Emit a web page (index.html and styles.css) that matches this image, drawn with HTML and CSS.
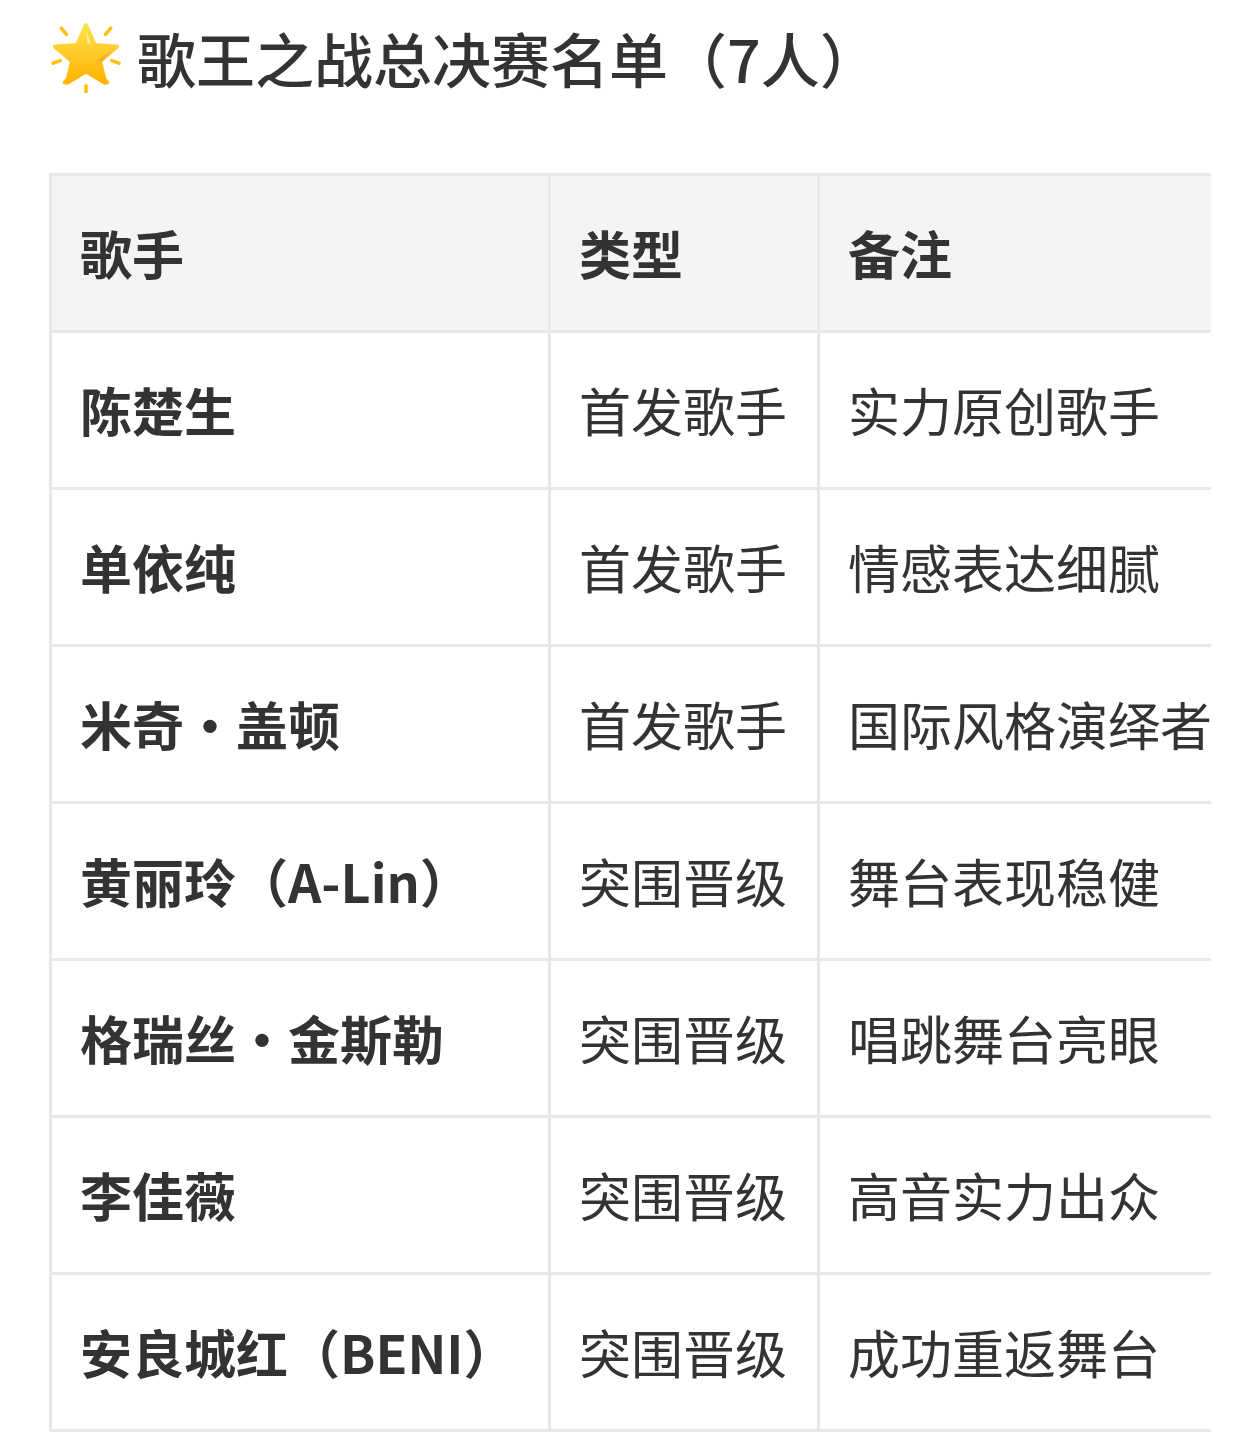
FILE: index.html
```html
<!DOCTYPE html>
<html lang="zh-CN">
<head>
<meta charset="utf-8">
<title>歌王之战总决赛名单</title>
<link rel="stylesheet" href="styles.css">
</head>
<body>
<div class="page">
  <h2 class="title">
    <svg class="star" viewBox="0 0 68 68" aria-hidden="true">
      <defs>
        <linearGradient id="sg" x1="0" y1="0" x2="0" y2="1">
          <stop offset="0" stop-color="#FFE14D"/>
          <stop offset="1" stop-color="#FFB300"/>
        </linearGradient>
      </defs>
      <g stroke="#FFC107" stroke-width="3.4" stroke-linecap="round">
        <line x1="10" y1="5" x2="15" y2="11"/>
        <line x1="58" y1="5" x2="53" y2="11"/>
        <line x1="2" y1="39" x2="9" y2="36.5"/>
        <line x1="66" y1="39" x2="59" y2="36.5"/>
        <line x1="13" y1="58" x2="17" y2="53"/>
        <line x1="55" y1="58" x2="51" y2="53"/>
        <line x1="34" y1="61" x2="34" y2="67"/>
      </g>
      <path fill="url(#sg)" stroke="url(#sg)" stroke-width="4" stroke-linejoin="round"
        d="M34 2 L42.5 21.5 L64 23 L47.5 37 L52.5 58 L34 47 L15.5 58 L20.5 37 L4 23 L25.5 21.5 Z"/>
      <path fill="#FFF59D" opacity="0.8" d="M34.5 7 L38.5 20 L35 20 Z"/>
      <path fill="#F9A825" opacity="0.85" d="M45 36 L59 27 L48 39.5 Z"/>
    </svg>
    <span>歌王之战总决赛名单（7人）</span>
  </h2>
  <div class="table-wrap">
    <table class="roster">
      <colgroup>
        <col class="c1">
        <col class="c2">
        <col class="c3">
      </colgroup>
      <thead>
        <tr><th>歌手</th><th>类型</th><th>备注</th></tr>
      </thead>
      <tbody>
        <tr><td class="name">陈楚生</td><td>首发歌手</td><td>实力原创歌手</td></tr>
        <tr><td class="name">单依纯</td><td>首发歌手</td><td>情感表达细腻</td></tr>
        <tr><td class="name">米奇・盖顿</td><td>首发歌手</td><td>国际风格演绎者</td></tr>
        <tr><td class="name">黄丽玲（A-Lin）</td><td>突围晋级</td><td>舞台表现稳健</td></tr>
        <tr><td class="name">格瑞丝・金斯勒</td><td>突围晋级</td><td>唱跳舞台亮眼</td></tr>
        <tr><td class="name">李佳薇</td><td>突围晋级</td><td>高音实力出众</td></tr>
        <tr><td class="name">安良城红（BENI）</td><td>突围晋级</td><td>成功重返舞台</td></tr>
      </tbody>
    </table>
  </div>
</div>
</body>
</html>
```

FILE: styles.css
```css
html, body {
  margin: 0;
  padding: 0;
  background: #ffffff;
}

body {
  font-family: "Noto Sans CJK SC", "Noto Sans", sans-serif;
  color: #333333;
}

.page {
  padding: 0 49px;
}

.title {
  display: flex;
  align-items: center;
  gap: 16px;
  margin: 18px 0 75px;
  height: 80px;
  font-size: 59px;
  font-weight: 500;
  line-height: 80px;
  color: #333333;
  white-space: nowrap;
}

.star {
  width: 70px;
  height: 70px;
  flex: none;
  margin-left: 2px;
}

.table-wrap {
  overflow: hidden;
  width: 1162px;
}

.roster {
  border-collapse: collapse;
  table-layout: fixed;
  width: 1260px;
  font-size: 52px;
}

.c1 { width: 499px; }
.c2 { width: 269px; }
.c3 { width: 492px; }

.roster th,
.roster td {
  border: 3px solid #e8e8e8;
  padding: 31px 28px;
  line-height: 92px;
  text-align: left;
  white-space: nowrap;
  overflow: hidden;
  color: #333333;
}

.roster th {
  background: #f4f4f4;
  font-weight: 700;
}

.roster td {
  font-weight: 400;
}

.roster td.name {
  font-weight: 700;
}
```
